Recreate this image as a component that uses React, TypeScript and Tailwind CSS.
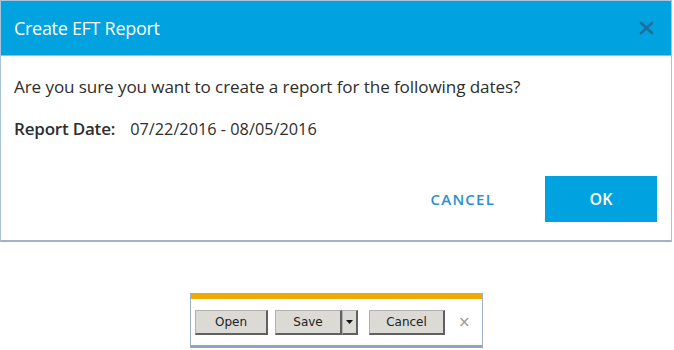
import React from 'react';

function Dialog() {
  return (
    <div className="w-[672px] h-[242px] border border-[#a9c3d9] border-b-[2px] border-b-[#9fb4c8] bg-white flex flex-col">
      <div className="h-[55px] shrink-0 bg-[#00a3e0] border-b border-[#7cc8ea] flex items-center justify-between pl-[13px] pr-[16px]">
        <span className="text-white text-[18px] tracking-[-0.3px] pt-[1px]">Create EFT Report</span>
        <svg width="15" height="14" viewBox="0 0 15 14" className="mr-[1px]">
          <path d="M2 2 L13 12 M13 2 L2 12" stroke="#1f6f9c" strokeWidth="2.8" strokeLinecap="round" />
        </svg>
      </div>
      <div className="flex-1 flex flex-col pl-[13px] pr-[14px]">
        <p className="mt-[20px] text-[17.1px] text-[#2e2e2e] leading-[22px] tracking-[-0.1px]">
          Are you sure you want to create a report for the following dates?
        </p>
        <p className="mt-[20px] text-[16.5px] text-[#2e2e2e] leading-[22px]">
          <span className="font-semibold text-[17px] tracking-[-0.2px]">Report Date:</span>
          <span className="ml-[15px] text-[16.3px]">07/22/2016 - 08/05/2016</span>
        </p>
        <div className="mt-auto mb-[18px] flex items-center justify-end">
          <button className="text-[15px] text-[#2a8fd4] font-semibold tracking-[1.2px] mr-[50px]">CANCEL</button>
          <button className="w-[112px] h-[46px] bg-[#00a3e0] text-white text-[16px] font-semibold">OK</button>
        </div>
      </div>
    </div>
  );
}

function ToolButton({ children, w }: { children: React.ReactNode; w: string }) {
  return (
    <button
      className={`${w} h-[25px] bg-[#dcdad5] border border-[#b0b0b0] border-r-[2px] border-b-[2px] border-r-[#606060] border-b-[#606060] text-[12px] text-[#222222] flex items-center justify-center`}
    >
      {children}
    </button>
  );
}

function Toolbar() {
  return (
    <div className="w-[293px] border border-[#9db0c4] border-t-0 border-b-[3px] border-b-[#8ea7c0] bg-white">
      <div className="h-[6px] mt-[1px] bg-[#f0aa00]" />
      <div className="h-[46px] flex items-center pl-[4px]">
        <ToolButton w="w-[73px]">Open</ToolButton>
        <div className="ml-[7px] flex">
          <ToolButton w="w-[67px]">Save</ToolButton>
          <ToolButton w="w-[16px]">
            <svg width="7" height="4" viewBox="0 0 7 4"><path d="M0 0 H7 L3.5 4 Z" fill="#111" /></svg>
          </ToolButton>
        </div>
        <div className="ml-[11px]">
          <ToolButton w="w-[76px]">Cancel</ToolButton>
        </div>
        <span className="ml-[13px] text-[15px] text-[#9a9a9a] leading-none">×</span>
      </div>
    </div>
  );
}

export default function App() {
  return (
    <div className="w-[674px] h-[350px] bg-white flex flex-col" style={{ fontFamily: '"Open Sans", sans-serif' }}>
      <Dialog />
      <div className="mt-[50px] pl-[190px]" style={{ fontFamily: 'Tahoma, "DejaVu Sans", sans-serif' }}>
        <Toolbar />
      </div>
    </div>
  );
}
